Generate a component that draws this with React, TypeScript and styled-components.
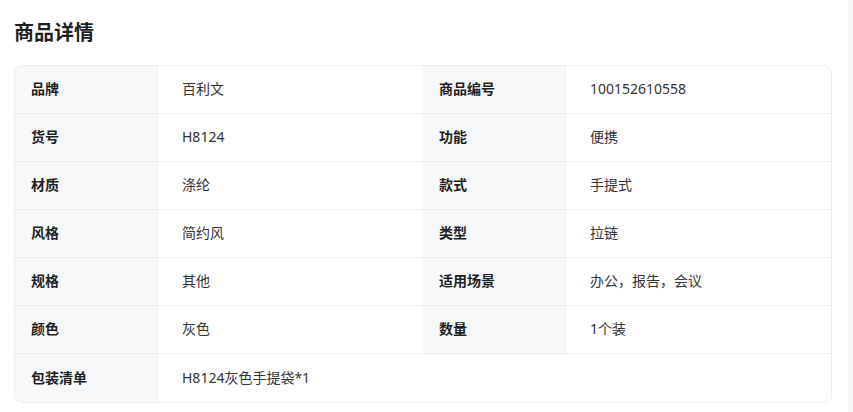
import styled, { createGlobalStyle } from 'styled-components';

const GlobalStyle = createGlobalStyle`
  html, body {
    margin: 0;
    padding: 0;
    background: #f5f6f8;
  }
  body {
    font-family: "Noto Sans", "Noto Sans CJK SC", sans-serif;
  }
`;

const Page = styled.main`
  width: 848px;
  height: 412px;
  box-sizing: border-box;
  background: #fff;
  padding: 19px 16px 0 14px;
`;

const Title = styled.h2`
  margin: 0 0 18px;
  font-size: 20px;
  line-height: 28px;
  font-weight: 700;
  color: #1f1f1f;
`;

const Table = styled.div`
  display: grid;
  grid-template-columns: 143px 1fr 143px 1fr;
  border: 1px solid #ebedf0;
  border-radius: 8px;
  overflow: hidden;
`;

const Cell = styled.div<{ $span?: number; $last?: boolean }>`
  grid-column: span ${(p) => p.$span ?? 1};
  height: 48px;
  box-sizing: border-box;
  padding-bottom: 1px;
  display: flex;
  align-items: center;
  font-size: 14px;
  line-height: 20px;
  border-bottom: ${(p) => (p.$last ? 'none' : '1px solid #ebedf0')};
`;

const Label = styled(Cell)`
  padding-left: 16px;
  padding-right: 16px;
  background: #f7f8fa;
  border-right: 1px solid #ebedf0;
  font-weight: 700;
  color: #1f1f1f;
`;

const Value = styled(Cell)`
  padding-left: 24px;
  padding-right: 24px;
  color: #333;
`;

const rows: [string, string, string, string][] = [
  ['品牌', '百利文', '商品编号', '100152610558'],
  ['货号', 'H8124', '功能', '便携'],
  ['材质', '涤纶', '款式', '手提式'],
  ['风格', '简约风', '类型', '拉链'],
  ['规格', '其他', '适用场景', '办公，报告，会议'],
  ['颜色', '灰色', '数量', '1个装'],
];

export default function App() {
  return (
    <>
      <GlobalStyle />
      <Page>
        <Title>商品详情</Title>
        <Table>
          {rows.map(([l1, v1, l2, v2]) => [
            <Label key={l1}>{l1}</Label>,
            <Value key={l1 + 'v'}>{v1}</Value>,
            <Label key={l2}>{l2}</Label>,
            <Value key={l2 + 'v'}>{v2}</Value>,
          ])}
          <Label $last>包装清单</Label>
          <Value $last $span={3}>H8124灰色手提袋*1</Value>
        </Table>
      </Page>
    </>
  );
}
